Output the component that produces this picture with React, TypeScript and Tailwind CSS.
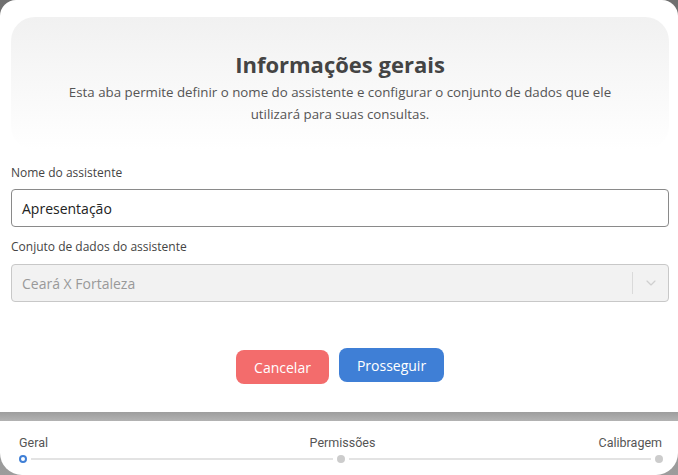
import { ChevronDown } from 'lucide-react';

export default function App() {
  return (
    <div className="w-[678px] h-[475px] flex flex-col bg-gradient-to-b from-[#6f6f6f] to-[#9c9c9c] overflow-hidden font-['Open_Sans',sans-serif]">
      {/* Modal */}
      <div className="h-[412px] bg-white rounded-t-2xl pl-[11px] pr-[9px] pt-[17px] flex flex-col">
        {/* Header card */}
        <div className="h-[133px] rounded-[24px] bg-gradient-to-b from-[#f1f1f1] to-white flex flex-col items-center pt-[33px] px-10">
          <h1 className="text-[22px] leading-7 font-bold text-[#444]">Informações gerais</h1>
          <p className="mt-[3px] text-[13.3px] leading-[22px] text-[#555] text-center max-w-[560px]">
            Esta aba permite definir o nome do assistente e configurar o conjunto de dados que ele utilizará para suas consultas.
          </p>
        </div>

        {/* Form */}
        <label className="mt-[15px] text-[12px] leading-4 text-[#444]">Nome do assistente</label>
        <div className="mt-[8px] h-[38px] rounded border border-[#8a8a8a] flex items-center px-[10px] text-[14px] text-[#222]">
          Apresentação
        </div>

        <label className="mt-[12px] text-[12px] leading-4 text-[#444]">Conjuto de dados do assistente</label>
        <div className="mt-[9px] h-[38px] rounded border border-[#c8c8c8] bg-[#f2f2f2] flex items-center text-[14px] text-[#999]">
          <span className="flex-1 px-[10px]">Ceará X Fortaleza</span>
          <span className="w-px h-[22px] bg-[#dadada]" />
          <span className="w-[35px] flex justify-center text-[#cfcfcf]">
            <ChevronDown size={16} strokeWidth={1.75} />
          </span>
        </div>

        {/* Actions */}
        <div className="mt-[46px] flex justify-center items-start gap-[10px]">
          <button className="mt-[2px] w-[93px] h-[34px] rounded-lg bg-[#f36c6c] text-white text-[14px]">Cancelar</button>
          <button className="w-[105px] h-[34px] rounded-lg bg-[#3f7fd6] text-white text-[14px]">Prosseguir</button>
        </div>
      </div>

      {/* Band */}
      <div className="h-[9px] bg-gradient-to-b from-[#9d9d9d] to-[#b3b3b3]" />

      {/* Stepper */}
      <div className="flex-1 bg-white rounded-b-[22px] pl-[19px] pr-[15px] pt-[15px] font-['Roboto',sans-serif]">
        <div className="grid grid-cols-3 text-[12.5px] leading-[14px] text-[#555]">
          <span>Geral</span>
          <span className="text-center ml-[3px]">Permissões</span>
          <span className="text-right mr-[1px]">Calibragem</span>
        </div>
        <div className="mt-[5px] flex items-center">
          <span className="w-[8px] h-[8px] rounded-full border-2 border-[#3f7fd6] bg-white" />
          <span className="flex-1 h-[2px] bg-[#e3e3e3] mx-[4px]" />
          <span className="w-[8px] h-[8px] rounded-full bg-[#cccccc]" />
          <span className="flex-1 h-[2px] bg-[#e3e3e3] mx-[4px]" />
          <span className="w-[8px] h-[8px] rounded-full bg-[#cccccc]" />
        </div>
      </div>
    </div>
  );
}
